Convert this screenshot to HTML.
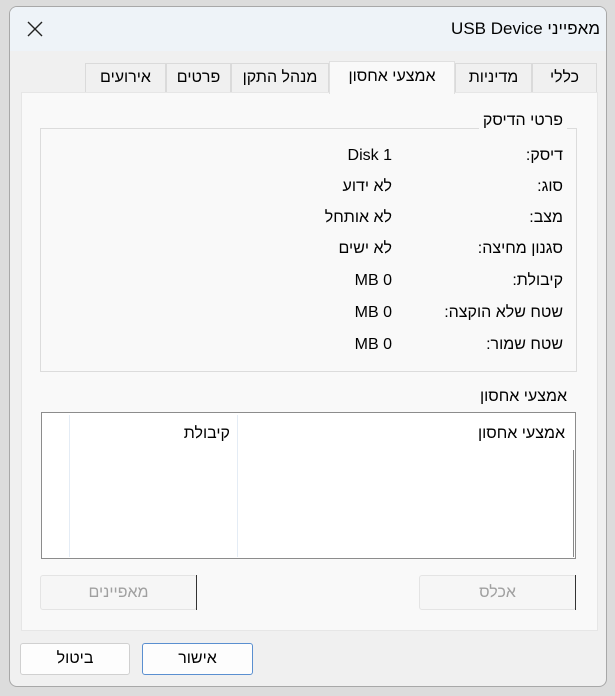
<!DOCTYPE html>
<html><head><meta charset="utf-8"><style>
*{margin:0;padding:0;box-sizing:border-box}
body{width:615px;height:696px;background:#dcdcdc;position:relative;overflow:hidden;font-family:"Liberation Sans","Noto Sans CJK SC",sans-serif;font-size:16px;color:#000}
.a{position:absolute}
.win{left:9px;top:6px;width:598px;height:681px;background:#f0f0f0;border:1px solid #a8a8a8;border-radius:8px;overflow:hidden}
.title{left:0;top:0;width:100%;height:44px;background:#eef3f8}
.r{direction:rtl;white-space:nowrap;line-height:18px}
.tab{top:63px;height:30px;background:#f0f0f0;border:1px solid #dadada;border-bottom:none;text-align:center;line-height:28px;direction:rtl;white-space:nowrap}
.btn{border:1px solid #d0d0d0;border-radius:3px;background:#fdfdfd;text-align:center;line-height:30px;direction:rtl}
</style></head><body>
<div class="a win">
 <div class="a title"></div>
</div>
<div class="a" style="left:26px;top:20px;font-size:20px;line-height:20px">
<svg width="18" height="18" viewBox="0 0 18 18"><path d="M2 2L16 16M16 2L2 16" stroke="#222" stroke-width="1.4" fill="none"/></svg></div>
<div class="a r" style="right:15px;top:20px;font-size:17px">מאפייני USB Device</div>

<div class="a tab" style="left:532px;width:65px">כללי</div>
<div class="a tab" style="left:455px;width:77px">מדיניות</div>
<div class="a tab" style="left:231px;width:98px">מנהל התקן</div>
<div class="a tab" style="left:166px;width:65px">פרטים</div>
<div class="a tab" style="left:85px;width:81px">אירועים</div>
<div class="a" style="left:21px;top:92px;width:577px;height:539px;background:#f9f9f9;border:1px solid #e6e6e6"></div>
<div class="a tab" style="left:329px;width:126px;top:61px;height:33px;background:#f9f9f9;border-color:#e0e0e0;line-height:30px">אמצעי אחסון</div>

<div class="a" style="left:40px;top:128px;width:537px;height:244px;border:1px solid #dcdcdc"></div>
<div class="a r" style="right:48px;top:112px;background:#f9f9f9;padding:0 4px">פרטי הדיסק</div>

<div class="a r" style="right:52px;top:147px">דיסק:</div><div class="a r" style="right:223px;top:147px">Disk 1</div>
<div class="a r" style="right:52px;top:178px">סוג:</div><div class="a r" style="right:223px;top:178px">לא ידוע</div>
<div class="a r" style="right:52px;top:209px">מצב:</div><div class="a r" style="right:223px;top:209px">לא אותחל</div>
<div class="a r" style="right:52px;top:240px">סגנון מחיצה:</div><div class="a r" style="right:223px;top:240px">לא ישים</div>
<div class="a r" style="right:52px;top:272px">קיבולת:</div><div class="a r" style="right:223px;top:272px">MB 0</div>
<div class="a r" style="right:52px;top:304px">שטח שלא הוקצה:</div><div class="a r" style="right:223px;top:304px">MB 0</div>
<div class="a r" style="right:52px;top:336px">שטח שמור:</div><div class="a r" style="right:223px;top:336px">MB 0</div>

<div class="a r" style="right:48px;top:388px">אמצעי אחסון</div>
<div class="a" style="left:41px;top:412px;width:535px;height:147px;background:#fff;border:1px solid #8c8c8c"></div>
<div class="a" style="left:237px;top:415px;width:1px;height:142px;background:#e4ecf5"></div>
<div class="a" style="left:69px;top:415px;width:1px;height:142px;background:#e4ecf5"></div>
<div class="a" style="left:573px;top:450px;width:1px;height:107px;background:#888"></div>
<div class="a r" style="right:50px;top:425px">אמצעי אחסון</div>
<div class="a r" style="right:385px;top:425px">קיבולת</div>

<div class="a btn" style="left:40px;top:575px;width:157px;height:35px;color:#a0a0a0;background:#f6f6f6;border-color:#e4e4e4;line-height:33px">מאפיינים</div>
<div class="a" style="left:196px;top:575px;width:1px;height:35px;background:#333"></div>
<div class="a btn" style="left:419px;top:575px;width:157px;height:35px;color:#a0a0a0;background:#f6f6f6;border-color:#e4e4e4;line-height:33px">אכלס</div>
<div class="a" style="left:575px;top:575px;width:1px;height:35px;background:#333"></div>

<div class="a btn" style="left:20px;top:643px;width:110px;height:32px">ביטול</div>
<div class="a btn" style="left:142px;top:643px;width:111px;height:32px;border-color:#5a8fd0">אישור</div>
</body></html>
